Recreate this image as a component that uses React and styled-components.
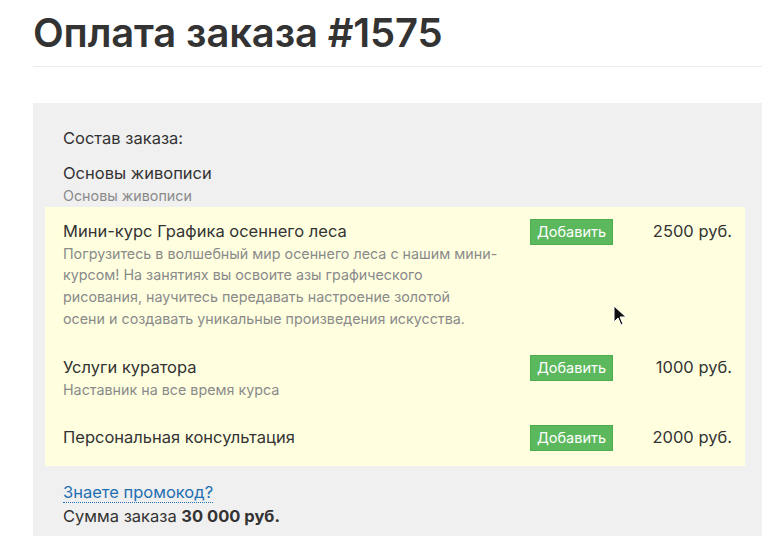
import React from 'react'
import styled, { createGlobalStyle } from 'styled-components'

const GlobalStyle = createGlobalStyle`
html, body {
    margin: 0;
    padding: 0;
    background: #fff;
    overflow: hidden;
}
body {
    font-family: Inter, "Noto Sans", "DejaVu Sans", sans-serif;
    color: #333;
}`

const Page = styled.div`
position: relative;
padding-left: 33px;
min-height: 536px;`

const Title = styled.h1`
margin: 0;
padding-top: 9px;
font-size: 40px;
line-height: 48px;
font-weight: 620;
letter-spacing: -0.15px;
color: #333;`

const Hr = styled.hr`
margin: 9px 0 0 0;
border: 0;
border-top: 1px solid #ececec;`

const Panel = styled.div`
margin-top: 36px;
background: #f0f0f0;
padding: 24px 0 30px 0;`

const Label = styled.div`
padding-left: 30px;
font-size: 16.5px;
line-height: 22px;`

const ItemTitle = styled.div`
font-size: 16.5px;
line-height: 23px;`

const ItemDesc = styled.div`
font-size: 14.3px;
line-height: 21.7px;
color: #8a8a8a;`

const Base = styled.div`
padding: 13px 0 0 30px;`

const Extras = styled.div`
margin: 0 17px 0 12px;
padding: 0 0 2px 0;
background: #ffffe0;`

const Row = styled.div`
display: grid;
grid-template-columns: 1fr 83px 119px;
align-items: start;
padding: 13px 13px 13px 18px;`

const TextCol = styled.div`
padding-right: 20px;`

const AddButton = styled.button`
height: 26px;
margin-top: -1px;
padding: 0;
border: 1px solid #4cae4c;
background: #5cb85c;
color: #fff;
font-family: inherit;
font-size: 14.5px;
line-height: 24px;
cursor: pointer;`

const Price = styled.div`
text-align: right;
font-size: 16.5px;
line-height: 23px;`

const Footer = styled.div`
padding: 14px 0 0 30px;
font-size: 16.5px;
line-height: 24px;`

const Promo = styled.a`
color: #1f6fb2;
text-decoration: none;
border-bottom: 1px dotted #1f6fb2;
cursor: pointer;`

const Cursor = styled.svg`
position: absolute;
left: 613px;
top: 305px;`

const extras = [
    {
        name: 'Мини-курс Графика осеннего леса',
        desc: [
            'Погрузитесь в волшебный мир осеннего леса с нашим мини-',
            'курсом! На занятиях вы освоите азы графического',
            'рисования, научитесь передавать настроение золотой',
            'осени и создавать уникальные произведения искусства.'
        ],
        price: '2500 руб.'
    },
    { name: 'Услуги куратора', desc: ['Наставник на все время курса'], price: '1000 руб.' },
    { name: 'Персональная консультация', price: '2000 руб.' }
]

export default function App() {
    return <>
        <GlobalStyle />
        <Page>
            <Title>Оплата заказа #1575</Title>
            <Hr />
            <Panel>
                <Label>Состав заказа:</Label>
                <Base>
                    <ItemTitle>Основы живописи</ItemTitle>
                    <ItemDesc>Основы живописи</ItemDesc>
                </Base>
                <Extras>
                    {extras.map(item => <Row key={item.name}>
                        <TextCol>
                            <ItemTitle>{item.name}</ItemTitle>
                            {item.desc && <ItemDesc>
                                {item.desc.map((line, i) => <React.Fragment key={i}>{i > 0 && <br />}{line}</React.Fragment>)}
                            </ItemDesc>}
                        </TextCol>
                        <AddButton>Добавить</AddButton>
                        <Price>{item.price}</Price>
                    </Row>)}
                </Extras>
                <Footer>
                    <div><Promo>Знаете промокод?</Promo></div>
                    <div>Сумма заказа <b>30 000 руб.</b></div>
                </Footer>
            </Panel>
            <Cursor width="14" height="22" viewBox="0 0 14 22">
                <path d="M1 1 L1 17 L5 13 L8 20 L10 19 L7 12 L13 12 Z" fill="#111" stroke="#fff" strokeWidth="1" />
            </Cursor>
        </Page>
    </>
}
